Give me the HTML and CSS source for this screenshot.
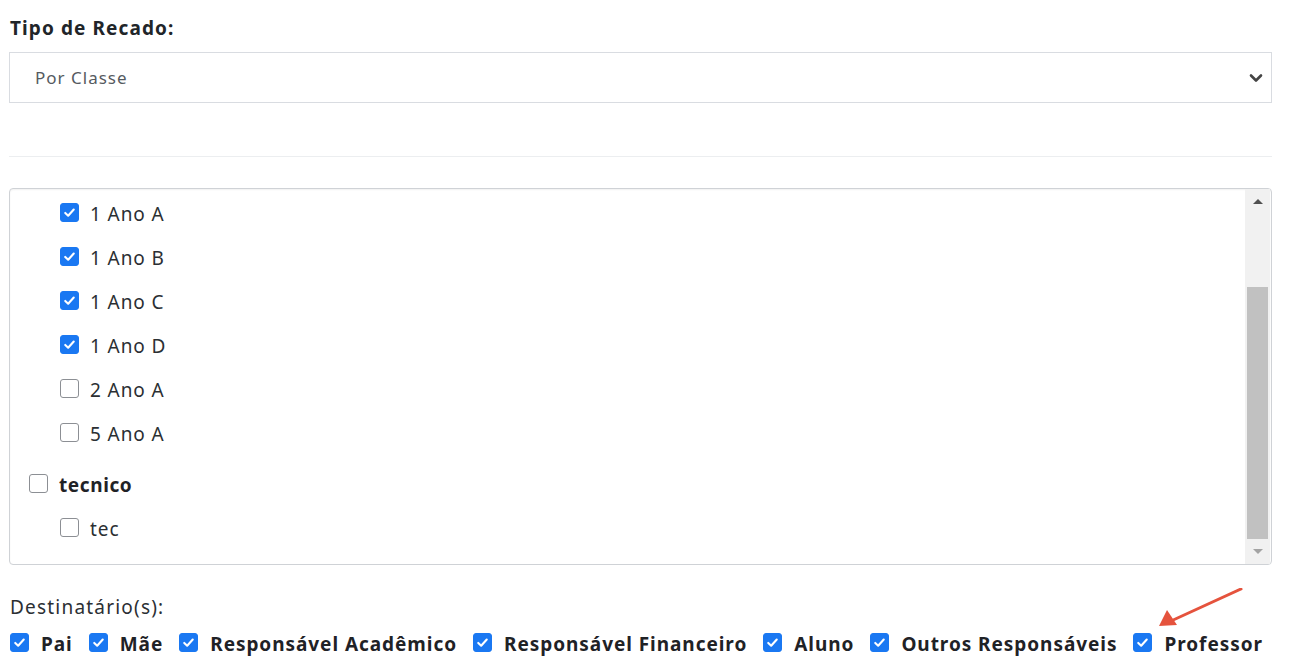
FILE: index.html
```html
<!DOCTYPE html>
<html lang="pt">
<head>
<meta charset="utf-8">
<title>Recado</title>
<link rel="stylesheet" href="styles.css">
</head>
<body>
<div class="page">
  <div class="field-label">Tipo de Recado:</div>
  <div class="select">
    <span class="select-text">Por Classe</span>
    <svg class="chevron" width="14" height="10" viewBox="0 0 14 10"><path d="M2 2.5 L7 7.5 L12 2.5" fill="none" stroke="#444" stroke-width="2.6" stroke-linecap="round" stroke-linejoin="round"/></svg>
  </div>
  <div class="divider"></div>
  <div class="tree-box">
    <div class="tree">
      <div class="row child"><span class="cb on"><svg viewBox="0 0 18 18"><path d="M4.5 9.5 L7.6 12.4 L13.5 5.8" fill="none" stroke="#fff" stroke-width="2.2" stroke-linecap="round" stroke-linejoin="round"/></svg></span><span class="txt">1 Ano A</span></div>
      <div class="row child"><span class="cb on"><svg viewBox="0 0 18 18"><path d="M4.5 9.5 L7.6 12.4 L13.5 5.8" fill="none" stroke="#fff" stroke-width="2.2" stroke-linecap="round" stroke-linejoin="round"/></svg></span><span class="txt">1 Ano B</span></div>
      <div class="row child"><span class="cb on"><svg viewBox="0 0 18 18"><path d="M4.5 9.5 L7.6 12.4 L13.5 5.8" fill="none" stroke="#fff" stroke-width="2.2" stroke-linecap="round" stroke-linejoin="round"/></svg></span><span class="txt">1 Ano C</span></div>
      <div class="row child"><span class="cb on"><svg viewBox="0 0 18 18"><path d="M4.5 9.5 L7.6 12.4 L13.5 5.8" fill="none" stroke="#fff" stroke-width="2.2" stroke-linecap="round" stroke-linejoin="round"/></svg></span><span class="txt">1 Ano D</span></div>
      <div class="row child"><span class="cb"></span><span class="txt">2 Ano A</span></div>
      <div class="row child"><span class="cb"></span><span class="txt">5 Ano A</span></div>
      <div class="row group"><span class="cb"></span><span class="txt bold">tecnico</span></div>
      <div class="row child"><span class="cb"></span><span class="txt">tec</span></div>
    </div>
    <div class="scrollbar">
      <div class="arrow up"></div>
      <div class="track"><div class="thumb"></div></div>
      <div class="arrow down"></div>
    </div>
  </div>
  <div class="dest-label">Destinatário(s):</div>
  <div class="dest-row">
    <label class="opt"><span class="cb on"><svg viewBox="0 0 18 18"><path d="M4.5 9.5 L7.6 12.4 L13.5 5.8" fill="none" stroke="#fff" stroke-width="2.2" stroke-linecap="round" stroke-linejoin="round"/></svg></span><span class="opt-txt">Pai</span></label>
    <label class="opt"><span class="cb on"><svg viewBox="0 0 18 18"><path d="M4.5 9.5 L7.6 12.4 L13.5 5.8" fill="none" stroke="#fff" stroke-width="2.2" stroke-linecap="round" stroke-linejoin="round"/></svg></span><span class="opt-txt">Mãe</span></label>
    <label class="opt"><span class="cb on"><svg viewBox="0 0 18 18"><path d="M4.5 9.5 L7.6 12.4 L13.5 5.8" fill="none" stroke="#fff" stroke-width="2.2" stroke-linecap="round" stroke-linejoin="round"/></svg></span><span class="opt-txt">Responsável Acadêmico</span></label>
    <label class="opt"><span class="cb on"><svg viewBox="0 0 18 18"><path d="M4.5 9.5 L7.6 12.4 L13.5 5.8" fill="none" stroke="#fff" stroke-width="2.2" stroke-linecap="round" stroke-linejoin="round"/></svg></span><span class="opt-txt">Responsável Financeiro</span></label>
    <label class="opt"><span class="cb on"><svg viewBox="0 0 18 18"><path d="M4.5 9.5 L7.6 12.4 L13.5 5.8" fill="none" stroke="#fff" stroke-width="2.2" stroke-linecap="round" stroke-linejoin="round"/></svg></span><span class="opt-txt">Aluno</span></label>
    <label class="opt"><span class="cb on"><svg viewBox="0 0 18 18"><path d="M4.5 9.5 L7.6 12.4 L13.5 5.8" fill="none" stroke="#fff" stroke-width="2.2" stroke-linecap="round" stroke-linejoin="round"/></svg></span><span class="opt-txt">Outros Responsáveis</span></label>
    <label class="opt"><span class="cb on"><svg viewBox="0 0 18 18"><path d="M4.5 9.5 L7.6 12.4 L13.5 5.8" fill="none" stroke="#fff" stroke-width="2.2" stroke-linecap="round" stroke-linejoin="round"/></svg></span><span class="opt-txt">Professor</span></label>
  </div>
  <svg class="annot-arrow" width="90" height="50" viewBox="0 0 90 50">
    <path d="M84 1 L14 33" stroke="#e5533d" stroke-width="3" stroke-linecap="round"/>
    <path d="M2 38 L10 22 L20 37 Z" fill="#e5533d"/>
  </svg>
</div>
</body>
</html>
```

FILE: styles.css
```css
* { box-sizing: border-box; }
html, body { margin: 0; padding: 0; background: #fff; }
body {
  font-family: "Noto Sans", "Liberation Sans", sans-serif;
  color: #212529;
  width: 1294px;
  height: 672px;
  overflow: hidden;
}
.page {
  position: relative;
  padding: 16px 22px 0 9px;
}
.field-label {
  font-weight: 700;
  font-size: 19px;
  line-height: 24px;
  padding-left: 1px;
  letter-spacing: 1.1px;
}
.select {
  margin-top: 12px;
  height: 51px;
  border: 1px solid #d9dce1;
  display: flex;
  align-items: center;
  justify-content: space-between;
  padding: 0 8px 0 25px;
}
.select-text {
  font-size: 17px;
  color: #555a60;
  letter-spacing: 1px;
}
.chevron { display: block; }
.divider {
  margin-top: 53px;
  height: 1px;
  background: #eceef0;
}
.tree-box {
  margin-top: 31px;
  height: 377px;
  border: 1px solid #cfd2d6;
  border-radius: 4px;
  display: flex;
  box-shadow: inset 0 1px 2px rgba(0,0,0,0.06);
}
.tree {
  flex: 1;
  padding: 3px 0 0 19px;
}
.row {
  height: 44px;
  display: flex;
  align-items: center;
}
.row.child { padding-left: 31px; }
.row.group { margin-top: 7px; }
.cb {
  width: 19px;
  height: 19px;
  border-radius: 3px;
  border: 1px solid #8c8f94;
  background: #fff;
  flex: none;
  display: block;
  position: relative;
  top: -2px;
}
.cb.on {
  background: #1a78f2;
  border-color: #1a78f2;
}
.cb svg { display: block; width: 17px; height: 17px; }
.txt {
  margin-left: 11px;
  font-size: 19px;
  color: #2b2f33;
  letter-spacing: 0.9px;
}
.txt.bold { font-weight: 700; color: #1f2226; letter-spacing: 0.6px; }
.scrollbar {
  width: 25px;
  background: #f1f1f1;
  display: flex;
  flex-direction: column;
  align-items: center;
  margin-right: 1px;
}
.arrow {
  height: 26px;
  width: 100%;
  display: flex;
  align-items: center;
  justify-content: center;
}
.arrow::before {
  content: "";
  width: 0;
  height: 0;
  border-left: 5px solid transparent;
  border-right: 5px solid transparent;
}
.arrow.up::before { border-bottom: 5px solid #505050; }
.arrow.down::before { border-top: 5px solid #a3a3a3; }
.track {
  flex: 1;
  width: 100%;
  padding: 72px 2px 0;
}
.thumb {
  height: 252px;
  background: #c1c1c1;
}
.dest-label {
  margin-top: 30px;
  font-size: 19px;
  line-height: 24px;
  padding-left: 1px;
  color: #2b2f33;
  letter-spacing: 1.2px;
}
.dest-row {
  margin-top: 12px;
  display: flex;
  gap: 16px;
  padding-left: 1px;
  white-space: nowrap;
  width: 1290px;
}
.opt {
  display: flex;
  align-items: center;
  flex: none;
}
.opt-txt {
  margin-left: 12px;
  font-size: 19px;
  font-weight: 700;
  color: #1f2226;
  letter-spacing: 0.95px;
}
.annot-arrow {
  position: absolute;
  left: 1157px;
  top: 588px;
}
```
